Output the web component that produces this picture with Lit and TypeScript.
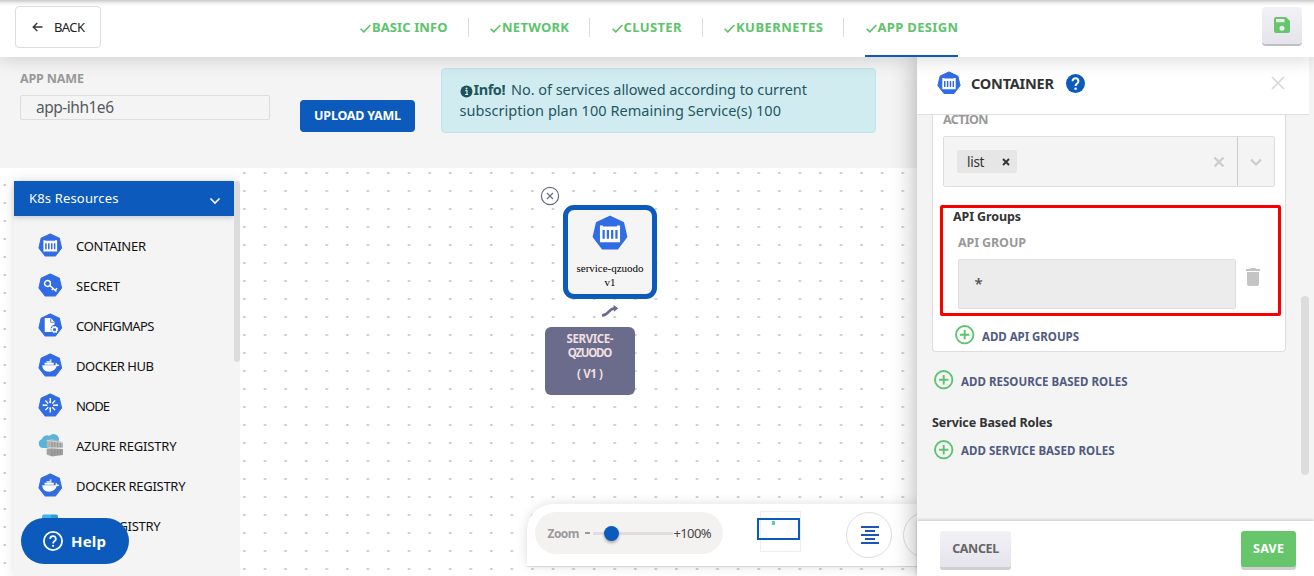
import { LitElement, html, css, svg } from "lit";
import { customElement, property } from "lit/decorators.js";

/** Single line of text whose tracking is adjusted so it spans a given width. */
@customElement("fit-text")
class FitText extends LitElement {
  static styles = css`
    :host { display: inline-block; white-space: nowrap; overflow: visible; }
  `;
  @property({ type: Number }) w = 0;
  firstUpdated() {
    const n = (this.textContent || "").length;
    const natural = this.getBoundingClientRect().width;
    if (this.w && n > 1) {
      this.style.letterSpacing = (this.w - natural) / (n - 1) + "px";
      this.style.width = this.w + "px";
    }
  }
  render() { return html`<slot></slot>`; }
}

const HEPTAGON = "12,0.9 20.9,5.1 23.1,14.6 17,22.5 7,22.5 0.9,14.6 3.1,5.1";

const glyphs: Record<string, unknown> = {
  container: svg`<path fill="#fff" fill-rule="evenodd" d="M5.300 7h2v.6h9.400V7h2v11.200H5.300zM7 10v5.900h1.500V10zM9.850 10v5.900h1.500V10zM12.700 10v5.900h1.500V10zM15.550 10v5.900h1.500V10z"/>`,
  secret: svg`<g fill="none" stroke="#fff" stroke-width="1.400"><circle cx="9.300" cy="10.300" r="2.900"/><path d="M11.500 12.300l6.600 5.700M14.800 15l-1.300 1.600M17 16.800l1.600-1.900"/></g>`,
  config: svg`<path fill="#fff" d="M6.600 5h6l3.600 3.800v2.400a4.400 4.400 0 0 0-2.700 7.300H6.600z"/><path d="M12.400 5.400v3.700h3.500" fill="none" stroke="#326ce5" stroke-width=".8"/><circle cx="16.200" cy="16.200" r="2.300" fill="none" stroke="#fff" stroke-width="1.400"/><circle cx="16.200" cy="16.200" r="3.100" fill="none" stroke="#fff" stroke-width="1" stroke-dasharray="1.200 1.230"/>`,
  docker: svg`<path fill="#fff" d="M4.200 12h13.100c.1-1.100-.2-1.900.2-2.500.8.4 1.100 1 1.200 1.700.9-.1 1.700.1 2.200.5-.5 1-1.500 1.400-2.700 1.400-1.300 3.700-3.600 5.200-7.400 5.200C6.600 18.300 4.400 16.300 4.200 12zM6.500 9.600h9v2h-9zM8.400 8h4.800v1.300H8.400zM11.500 6.300h1.700v1.400h-1.700z"/>`,
  node: svg`<g stroke="#fff" stroke-width="1.300" fill="none"><path d="M12 5v4.600M12 14.600v4.600M5 12h4.200M14.800 12H19M7.200 7.400l2.800 2.800M14 14l2.800 2.800M16.800 7.400L14 10.200M10 14l-2.800 2.800"/></g><g fill="#fff"><circle cx="12" cy="9" r="1"/><circle cx="12" cy="15" r="1"/><circle cx="5.400" cy="12" r="1"/><circle cx="18.600" cy="12" r="1"/></g>`,
};

function kube(name: string, size: number) {
  return html`<svg class="kube" width=${size} height=${size} viewBox="0 0 24 24">
    <polygon points=${HEPTAGON} fill="#326ce5" stroke="#326ce5" stroke-width="1" stroke-linejoin="round"></polygon>
    ${glyphs[name]}
  </svg>`;
}

const azure = html`<svg width="26" height="24" viewBox="0 0 26 24">
  <path fill="#59b4d9" d="M5 14a4.500 4.500 0 0 1-1.300-8.700A5.800 5.800 0 0 1 11.500 1.800a5.500 5.500 0 0 1 9.500 3.700l-1 4-10 4.500z"/>
  <path fill="#b4b4b4" d="M8.700 6.500l5-1.500 11.300 3.300V14l-11 0-5.300-1z"/><path fill="#a0a0a0" d="M8.700 14.500l5-.5 11.300 1v6l-11 1.500-5.300-2z"/>
  <path stroke="#8a8a8a" stroke-width=".8" fill="none" d="M14 7v6.500M16.800 7.500v5.500M19.600 8v5M22.400 8.500v4.500M14 15.500v6.500M16.800 15.500v6M19.600 16v5M22.400 16v5"/>
  <path stroke="#e2e2e2" stroke-width=".7" fill="none" d="M8.700 6.500l5 .5 11.300 1.800M9 14h16"/>
</svg>`;

const registry = html`<svg width="24" height="24" viewBox="0 0 24 24"><path fill="#3fb4ea" d="M4 2.500q0-2 2-2h7V22H4z"/><path fill="#2a9fd6" d="M13 .5h5q2 0 2 2V22h-7z"/></svg>`;

const plus = html`<svg width="20" height="20" viewBox="0 0 20 20"><g fill="none" stroke="#5dc36c" stroke-width="1.900"><circle cx="9.700" cy="9.700" r="8.700"/><path d="M9.700 5v9.400M5 9.700h9.400"/></g></svg>`;

const RESOURCES = [
  { icon: "container", label: "CONTAINER", w: 70 },
  { icon: "secret", label: "SECRET", w: 44 },
  { icon: "config", label: "CONFIGMAPS", w: 78.5 },
  { icon: "docker", label: "DOCKER HUB", w: 78 },
  { icon: "node", label: "NODE", w: 34 },
  { icon: "azure", label: "AZURE REGISTRY", w: 100.5 },
  { icon: "docker", label: "DOCKER REGISTRY", w: 109.5 },
  { icon: "registry", label: "GCR REGISTRY", w: 84.5 },
];

const STEPS = [
  { label: "BASIC INFO", w: 75.5 },
  { label: "NETWORK", w: 67 },
  { label: "CLUSTER", w: 58 },
  { label: "KUBERNETES", w: 87 },
  { label: "APP DESIGN", w: 80.5 },
];

@customElement("app-root")
class AppRoot extends LitElement {
  static styles = css`
    :host { display: block; position: relative; width: 1314px; height: 576px; overflow: hidden; background: #fff;
      font-family: "Noto Sans", "Open Sans", sans-serif; font-size: 13px; color: #333; }
    * { box-sizing: border-box; }
    svg { display: block; flex: none; }

    .topbar { position: relative; z-index: 5; height: 57px; background: linear-gradient(#c9c9c9, #efefef 3px, #fff 6px); display: flex; align-items: flex-start;
      padding: 6px 12px 0 15px; box-shadow: 0 2px 18px rgba(0,0,0,.16); }
    .back { width: 86px; height: 42px; border: 1px solid #ddd; border-radius: 4px; background: #fff; display: flex; align-items: center; padding-left: 16px; gap: 11px; color: #222; }
    .steps { display: flex; margin-left: 258px; height: 51px; }
    .step { display: flex; color: #5dc36c; font-weight: 700; line-height: 43px; height: 51px; }
    .step svg { margin: 18px 1px 0 1px; }
    .step + .step { margin-left: 41.500px; position: relative; }
    .step + .step::before { content: ""; position: absolute; left: -21.500px; top: 12px; height: 19px; width: 1px; background: #dcdcdc; }
    .step.active { border-bottom: 2px solid #0b5abc; }
    .save-icon { margin-left: auto; margin-top: 1px; width: 40px; height: 37px; border-radius: 4px; background: linear-gradient(#f2f1f6, #e5e4ec); box-shadow: 0 2px 0 #bfbfc3; display: grid; place-items: center; padding-bottom: 2px; }

    .formbar { height: 111px; background: #f4f4f4; display: flex; padding-left: 20px; }
    .field { width: 250px; padding-top: 14px; }
    .caption { font-size: 12.5px; font-weight: 700; color: #999; line-height: 16px; display: block; }
    .app-input { margin-top: 8px; height: 25px; border: 1px solid #ddd; border-radius: 2px; padding-left: 15px; font-size: 15.5px; line-height: 23px; color: #555b62; }
    .upload { margin: 43px 0 0 30px; width: 115px; height: 32px; background: #0b5abc; color: #fff; border-radius: 4px; font-weight: 700; font-size: 12.5px; line-height: 31px; text-align: center; }
    .alert { margin: 11px 0 0 26px; width: 435px; height: 65px; background: #d1ecf1; border: 1px solid #bee5eb; border-radius: 4px; color: #24565f; padding: 10px 0 0 17.500px; font-size: 14.500px; line-height: 21px; }
    .alert .line { display: flex; }
    .alert svg { margin: 6px 1px 0 0; }
    .alert b { margin-right: 5.500px; }

    .stage { height: 408px; display: flex; position: relative; }
    .gutter { width: 14px; height: 408px; }
    .dots { position: absolute; inset: 0; }
    .sidebar { position: relative; margin-top: 13px; width: 226px; height: 395px; background: #f4f4f4; box-shadow: 0 0 12px rgba(0,0,0,.13); clip-path: inset(-13px 0 0 -14px); }
    .side-head { position: relative; width: 220px; height: 35px; background: #0b5abc; color: #fff; display: flex; align-items: center; justify-content: space-between; padding: 0 13px 1px 15px; box-shadow: 0 2px 5px rgba(0,0,0,.16); }
    .side-head svg { margin-top: 5px; }
    .items { padding: 9.500px 0 0 24px; }
    .item { height: 40px; display: flex; align-items: center; color: #111; }
    .item .pic { width: 38px; }
    .side-scroll { position: absolute; right: 0; top: 0; width: 6px; height: 181px; background: #dcdcdc; border-radius: 3px; }

    .node { position: absolute; left: 563px; top: 37px; width: 94px; height: 94px; border: 5px solid #0b5abc; border-radius: 11px; background: #f5f5f5; display: flex; flex-direction: column; align-items: center; padding-top: 5px; font-family: "Liberation Serif", serif; font-size: 11px; color: #000; line-height: 14px; }
    .node svg { margin-bottom: 10px; }
    .node-close { position: absolute; left: 540px; top: 18px; }
    .node-link { position: absolute; left: 601px; top: 137px; }
    .node-label { position: absolute; left: 545px; top: 159px; width: 90px; height: 68px; border-radius: 6px; background: #6b6b8b; color: #efdfe0; font-weight: 700; font-size: 11.500px; line-height: 14px; padding-top: 5px; display: flex; flex-direction: column; align-items: center; }
    .node-label .ver { margin-top: 7px; }

    .tools { position: absolute; left: 527px; top: 336px; width: 480px; height: 62px; border-radius: 26px 0 0 0; background: #fff; box-shadow: 0 0 12px rgba(0,0,0,.13), 0 1px 1px rgba(0,0,0,.12); display: flex; padding: 8px 0 0 8px; }
    .zoom { width: 188px; height: 42px; border-radius: 21px; background: #f4f2f1; display: flex; align-items: center; padding-left: 12.500px; color: #444; }
    .zoom .zt { color: #999; font-weight: 700; font-size: 12px; }
    .zoom .minus { width: 5px; height: 1.500px; background: #999; margin: 0 3px 0 5px; }
    .track { width: 80px; height: 3px; background: #ddd; display: flex; align-items: center; padding-left: 11px; margin: 1px 1px 0 0; }
    .knob { width: 15px; height: 15px; border-radius: 50%; background: #0b5abc; box-shadow: 0 2px 3px rgba(0,0,0,.3); flex: none; }
    .mini { margin-left: 37px; width: 41px; height: 41px; margin-top: -1px; border: 1px solid #eee; padding-top: 6px; }
    .view { margin-left: -4px; width: 43px; height: 22px; border: 2px solid #0b5abc; padding: 1px 0 0 13px; }
    .dot { width: 3px; height: 4px; background: #5ccdbd; }
    .round { margin: 0 0 0 45px; width: 46px; height: 46px; border-radius: 50%; border: 1px solid #ddd; display: grid; place-items: center; padding-left: 1px; }
    .round + .round { margin-left: 11px; }

    .help { position: absolute; z-index: 4; left: 21px; top: 518px; width: 108px; height: 46px; border-radius: 23px; background: #0b5abc; color: #fff; display: flex; align-items: center; gap: 8px; padding-left: 22px; font-weight: 700; font-size: 15px; }
    .help fit-text { margin-top: -1px; }

    .drawer { position: absolute; z-index: 4; left: 917px; top: 57px; width: 397px; height: 519px; background: #f4f4f4; box-shadow: 0 0 24px rgba(0,0,0,.32); display: flex; flex-direction: column; }
    .d-head { width: 392px; height: 58px; background: #fff; border-bottom: 1px solid #ddd; display: flex; align-items: center; padding: 0 24px 5px 20px; flex: none; }
    .d-title { margin: -1px 12px 0 10px; font-size: 14.500px; font-weight: 700; }
    .d-close { margin-left: auto; }
    .d-body { position: relative; flex: 1; overflow: hidden; padding-left: 15px; }
    .card { width: 354px; height: 237px; background: #fff; border: 1px solid #ddd; border-top: 0; border-radius: 0 0 4px 4px; padding: 0 10px; position: relative; display: flex; flex-direction: column; }
    .card > .caption { margin-top: -3px; height: 16px; }
    .select { width: 332px; height: 51px; margin-top: 8px; border: 1px solid #ddd; border-radius: 2px; background: #f4f4f4; display: flex; align-items: center; padding-left: 13px; flex: none; }
    .tag { width: 60px; height: 23px; border-radius: 2px; background: #e6e6e6; display: flex; align-items: center; padding: 0 7px 0 10px; justify-content: space-between; font-size: 13.500px; }
    .clear { margin: 1px 12px 0 auto; }
    .drop { width: 37px; height: 49px; border-left: 1px solid #ccc; display: grid; place-items: center; }
    .callout { position: absolute; left: 6.500px; top: 90px; width: 341px; height: 111px; border: 3px solid #f80000; border-radius: 2px; }
    .group { padding: 21px 0 0 10px; }
    .group .h { line-height: 18px; height: 18px; }
    .h { font-weight: 700; font-size: 12.500px; }
    .group .caption { margin: 9px 0 0 5px; height: 16px; }
    .grow { display: flex; margin: 8px 0 0 5px; gap: 10px; }
    .ginput { width: 278px; height: 50px; border: 1px solid #dedede; border-radius: 2px; background: #ececec; color: #555; padding-left: 15.500px; font-size: 15px; line-height: 47px; font-weight: 600; }
    .grow svg { margin-top: 9px; }
    .add { display: flex; align-items: center; height: 20px; gap: 7.500px; color: #4f5b7f; font-weight: 700; font-size: 11.500px; }
    .add fit-text { padding-top: 2px; }
    .group-add { margin: 16px 0 0 1.500px; }
    .a2 { margin: 18px 0 0 1.500px; }
    .h2 { margin-top: 24px; line-height: 18px; height: 18px; }
    .a3 { margin: 7.500px 0 0 1.500px; }
    .d-scroll { position: absolute; left: 384px; top: 181px; width: 8px; height: 179px; background: #dcdcdc; border-radius: 4px; }
    .d-foot { height: 55px; flex: none; background: #fff; box-shadow: 0 -1px 3px rgba(0,0,0,.2); display: flex; justify-content: space-between; padding: 10px 18px 0 23px; }
    .btn { height: 36px; border-radius: 3px; background: linear-gradient(#f2f1f6, #e5e4ec); box-shadow: 0 3px 0 #cfcfd1; font-weight: 700; font-size: 12.500px; line-height: 35px; text-align: center; width: 71px; color: #666; }
    .btn.green { width: 55px; background: #67c66c; color: #fff; }
  `;

  render() {
    return html`
      <div class="topbar">
        <div class="back">
          <svg width="11" height="10" viewBox="0 0 11 10"><path d="M10.500 5H1.200M5.300 1L1.200 5l4.100 4" fill="none" stroke="#333" stroke-width="1.300"/></svg>
          <fit-text w="31">BACK</fit-text>
        </div>
        <div class="steps">
          ${STEPS.map((s, i) => html`<div class="step ${i === 4 ? "active" : ""}">
            <svg width="11" height="9" viewBox="0 0 11 9"><path d="M.6 4.700l3.200 3.200L10.400 1" fill="none" stroke="#5dc36c" stroke-width="1.600"/></svg>
            <fit-text w=${s.w}>${s.label}</fit-text></div>`)}
        </div>
        <div class="save-icon">
          <svg width="16" height="16" viewBox="0 0 16 16"><path fill="#67c66c" fill-rule="evenodd" d="M2 0h10l4 4v10a2 2 0 0 1-2 2H2a2 2 0 0 1-2-2V2a2 2 0 0 1 2-2zM2 2v3.200h8.500V2zM8 8.700a2.500 2.500 0 1 0 0 5 2.500 2.500 0 0 0 0-5z"/></svg>
        </div>
      </div>

      <div class="formbar">
        <div class="field">
          <div class="caption"><fit-text w="64">APP NAME</fit-text></div>
          <div class="app-input"><fit-text w="78">app-ihh1e6</fit-text></div>
        </div>
        <div class="upload"><fit-text w="87">UPLOAD YAML</fit-text></div>
        <div class="alert">
          <div class="line">
            <svg width="13" height="13" viewBox="0 0 13 13"><circle cx="6.500" cy="6.500" r="6" fill="#1c525c"/><path d="M5.300 5.700h1.700v3.500M5 9.500h3.200" stroke="#d1ecf1" stroke-width="1.200" fill="none"/><circle cx="6.500" cy="3.500" r="1" fill="#d1ecf1"/></svg>
            <b><fit-text w="32">Info!</fit-text></b><fit-text w="296">No. of services allowed according to current</fit-text>
          </div>
          <fit-text w="321.5">subscription plan 100 Remaining Service(s) 100</fit-text>
        </div>
      </div>

      <div class="stage">
        <svg class="dots" width="1314" height="408">
          <defs>
            <pattern id="main" x="234.300" y="-4" width="20.570" height="18" patternUnits="userSpaceOnUse"><rect x="9" y="8" width="2.400" height="2" fill="#cbcbcb"/></pattern>
            <pattern id="edge" x="0" y="8" width="14" height="18" patternUnits="userSpaceOnUse"><rect x="3.500" y="8" width="2.400" height="2" fill="#cbcbcb"/></pattern>
          </defs>
          <rect x="241" y="0" width="1073" height="408" fill="url(#main)"/>
          <rect x="0" y="13" width="14" height="395" fill="url(#edge)"/>
        </svg>
        <div class="gutter"></div>
        <div class="sidebar">
          <div class="side-head"><fit-text w="89.5">K8s Resources</fit-text>
            <svg width="12" height="8" viewBox="0 0 12 8"><path d="M1.500 1.500L6 6l4.500-4.500" fill="none" stroke="#fff" stroke-width="1.700"/></svg>
          </div>
          <div class="items">
            ${RESOURCES.map((r) => html`<div class="item"><div class="pic">${r.icon === "azure" ? azure : r.icon === "registry" ? registry : kube(r.icon, 24.5)}</div><fit-text w=${r.w}>${r.label}</fit-text></div>`)}
          </div>
          <div class="side-scroll"></div>
        </div>

        <svg class="node-close" width="20" height="20" viewBox="0 0 20 20"><circle cx="10" cy="10" r="8.600" fill="#fff" stroke="#6b6b8b" stroke-width="1.200"/><path d="M7 7l6 6M13 7l-6 6" stroke="#6b6b8b" stroke-width="1.200"/></svg>
        <div class="node">${kube("container", 36)}<fit-text w="67">service-qzuodo</fit-text><span>v1</span></div>
        <svg class="node-link" width="18" height="12" viewBox="0 0 18 12"><path d="M1 10.300C7.500 10.800 7 3.600 14 3.400" fill="none" stroke="#6b6b8b" stroke-width="2.700"/><path d="M12.500 0l4.800 3.200-4.300 3.600z" fill="#6b6b8b"/></svg>
        <div class="node-label"><fit-text w="47">SERVICE-</fit-text><fit-text w="44.5">QZUODO</fit-text><fit-text class="ver" w="26">( V1 )</fit-text></div>

        <div class="tools">
          <div class="zoom"><fit-text class="zt" w="32">Zoom</fit-text><span class="minus"></span><div class="track"><span class="knob"></span></div><fit-text w="38">+100%</fit-text></div>
          <div class="mini"><div class="view"><div class="dot"></div></div></div>
          ${[0, 1].map(() => html`<div class="round"><svg width="18" height="18" viewBox="0 0 18 18"><path d="M0 1h18M4 5h10M0 9h18M4 13h10M0 17h18" stroke="#1d55b8" stroke-width="2"/></svg></div>`)}
        </div>
      </div>

      <div class="help">
        <svg width="20" height="20" viewBox="0 0 20 20"><circle cx="10" cy="10" r="9.100" fill="none" stroke="#fff" stroke-width="1.800"/><path d="M7.200 8a2.800 2.800 0 1 1 4.200 2.300c-.9.6-1.300 1-1.300 2.100" fill="none" stroke="#fff" stroke-width="1.700"/><circle cx="10.100" cy="14.800" r="1.100" fill="#fff"/></svg>
        <fit-text w="35">Help</fit-text>
      </div>

      <div class="drawer">
        <div class="d-head">
          ${kube("container", 24)}
          <span class="d-title"><fit-text w="83">CONTAINER</fit-text></span>
          <svg width="19" height="19" viewBox="0 0 19 19"><circle cx="9.500" cy="9.500" r="9.500" fill="#0b5abc"/><path d="M6.600 7.200a2.900 2.900 0 1 1 4.500 2.300c-1 .7-1.500 1-1.500 2.400" fill="none" stroke="#fff" stroke-width="2"/><circle cx="9.600" cy="14.700" r="1.300" fill="#fff"/></svg>
          <svg class="d-close" width="14" height="14" viewBox="0 0 14 14"><path d="M1 1l12 12M13 1L1 13" stroke="#d8d8d8" stroke-width="1.700"/></svg>
        </div>
        <div class="d-body">
          <div class="card">
            <div class="caption"><fit-text w="45.5">ACTION</fit-text></div>
            <div class="select">
              <div class="tag"><fit-text w="17.5">list</fit-text><svg width="8" height="8" viewBox="0 0 8 8"><path d="M1 1l6 6M7 1L1 7" stroke="#333" stroke-width="1.900"/></svg></div>
              <svg class="clear" width="12" height="12" viewBox="0 0 12 12"><path d="M1.500 1.500l9 9M10.500 1.500l-9 9" stroke="#ccc" stroke-width="2.300"/></svg>
              <div class="drop"><svg width="12" height="8" viewBox="0 0 12 8"><path d="M1 1.500l5 5 5-5" fill="none" stroke="#ccc" stroke-width="2.300"/></svg></div>
            </div>
            <div class="group">
              <div class="h"><fit-text w="68">API Groups</fit-text></div>
              <div class="caption"><fit-text w="68">API GROUP</fit-text></div>
              <div class="grow"><div class="ginput">*</div>
                <svg width="14" height="18" viewBox="0 0 14 18"><path fill="#c4c4c4" d="M0 1h3.500l1-1h5l1 1H14v2H0zM1 4h12v12a2 2 0 0 1-2 2H3a2 2 0 0 1-2-2z"/></svg>
              </div>
              <div class="add group-add">${plus}<fit-text w="97">ADD API GROUPS</fit-text></div>
            </div>
            <div class="callout"></div>
          </div>
          <div class="add a2">${plus}<fit-text w="166.5">ADD RESOURCE BASED ROLES</fit-text></div>
          <div class="h h2"><fit-text w="120.5">Service Based Roles</fit-text></div>
          <div class="add a3">${plus}<fit-text w="153.5">ADD SERVICE BASED ROLES</fit-text></div>
          <div class="d-scroll"></div>
        </div>
        <div class="d-foot">
          <div class="btn"><fit-text w="47">CANCEL</fit-text></div>
          <div class="btn green"><fit-text w="31">SAVE</fit-text></div>
        </div>
      </div>
    `;
  }
}
